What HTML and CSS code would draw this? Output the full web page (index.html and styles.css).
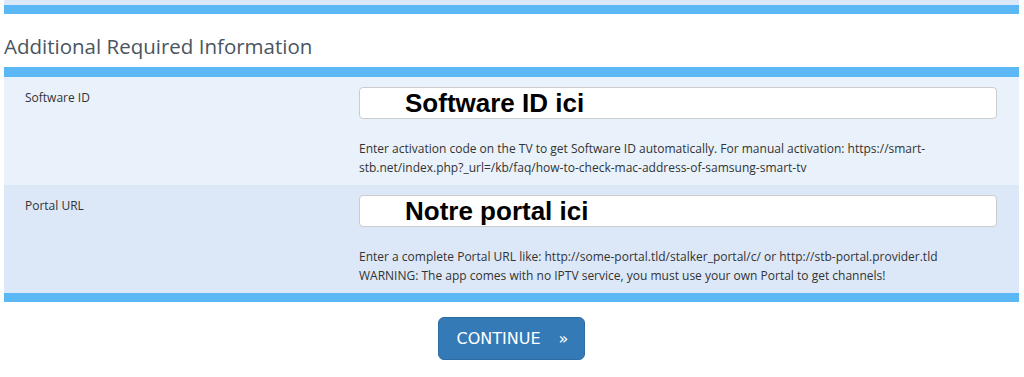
FILE: index.html
```html
<!doctype html>
<html lang="en">
<head>
  <meta charset="utf-8" />
  <title>Additional Required Information</title>
  <link rel="stylesheet" href="styles.css">
</head>
<body>
<div class="wrap">
  <div class="prevBox"></div>

  <h3 class="title">Additional Required Information</h3>

  <div class="fields">
    <div class="field">
      <label class="lbl">Software ID</label>
      <div class="ctl">
        <input class="inp" type="text" value="Software ID ici">
        <div class="help">Enter activation code on the TV to get Software ID automatically. For manual activation: https://smart-stb.net/index.php?_url=/kb/faq/how-to-check-mac-address-of-samsung-smart-tv</div>
      </div>
    </div>
    <div class="field alt">
      <label class="lbl">Portal URL</label>
      <div class="ctl">
        <input class="inp" type="text" value="Notre portal ici">
        <div class="help">Enter a complete Portal URL like: http://some-portal.tld/stalker_portal/c/ or http://stb-portal.provider.tld<br>WARNING: The app comes with no IPTV service, you must use your own Portal to get channels!</div>
      </div>
    </div>
  </div>

  <div class="actions">
    <button class="btn">CONTINUE<span class="arr">&raquo;</span></button>
  </div>
</div>
</body>
</html>
```

FILE: styles.css
```css
:root{
  --band:#5bb8f4;
  --row:#e9f1fa;
  --rowAlt:#dce8f8;
  --text:#333;
  --muted:#4a5560;
}

*{box-sizing:border-box}
body{
  margin:0;
  font-family:"Open Sans","Noto Sans",sans-serif;
  color:var(--text);
  background:#fff;
}

.wrap{padding:0 5px 0 4px}

.prevBox{
  height:14px;
  background:var(--rowAlt);
  border-bottom:9px solid var(--band);
}

.title{
  margin:0;
  padding:20px 0 9px;
  font-size:20.5px;
  font-weight:400;
  line-height:24px;
  color:var(--muted);
}

/* ===== CAMPOS ===== */
.fields{
  border-top:10px solid var(--band);
  border-bottom:9px solid var(--band);
}

.field{
  display:flex;
  background:var(--row);
  padding:10px 22px 9px 21px;
  height:108px;
}
.field.alt{background:var(--rowAlt)}

.lbl{
  width:334px;
  flex:none;
  font-size:12px;
  line-height:16px;
  padding-top:3px;
}

.ctl{flex:1}

.inp{
  display:block;
  width:100%;
  height:32px;
  border:1px solid #ccc;
  border-radius:4px;
  background:#fff;
  padding:0 0 0 45px;
  font-family:"Liberation Sans",Arial,sans-serif;
  font-weight:700;
  font-size:26px;
  color:#000;
  outline:none;
}

.help{
  margin-top:20px;
  font-size:12px;
  line-height:19px;
}

/* ===== BOTAO ===== */
.actions{
  display:flex;
  justify-content:center;
  padding-top:15px;
}

.btn{
  width:147px;
  height:43px;
  border:1px solid #2e6da4;
  border-radius:6px;
  background:#337ab7;
  color:#fff;
  font-family:"DejaVu Sans",Verdana,sans-serif;
  font-size:16px;
  padding:0 0 0 2px;
  cursor:pointer;
}
.arr{margin-left:18px}
```
